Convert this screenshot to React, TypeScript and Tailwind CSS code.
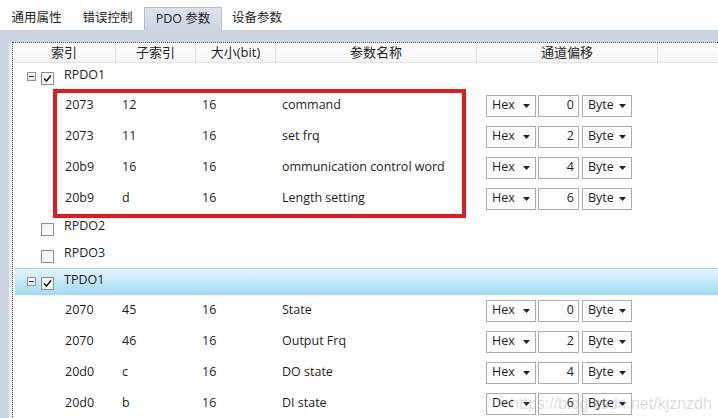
import React from 'react';

interface PdoEntry {
  index: string;
  sub: string;
  size: string;
  name: string;
  base: string;
  offset: string;
}

const rpdo1: PdoEntry[] = [
  { index: '2073', sub: '12', size: '16', name: 'command', base: 'Hex', offset: '0' },
  { index: '2073', sub: '11', size: '16', name: 'set frq', base: 'Hex', offset: '2' },
  { index: '20b9', sub: '16', size: '16', name: 'ommunication control word', base: 'Hex', offset: '4' },
  { index: '20b9', sub: 'd', size: '16', name: 'Length setting', base: 'Hex', offset: '6' },
];

const tpdo1: PdoEntry[] = [
  { index: '2070', sub: '45', size: '16', name: 'State', base: 'Hex', offset: '0' },
  { index: '2070', sub: '46', size: '16', name: 'Output Frq', base: 'Hex', offset: '2' },
  { index: '20d0', sub: 'c', size: '16', name: 'DO state', base: 'Hex', offset: '4' },
  { index: '20d0', sub: 'b', size: '16', name: 'DI state', base: 'Dec', offset: '6' },
];

const cols = 'grid grid-cols-[103px_80px_80px_201px_181px_1fr]';

function Arrow() {
  return (
    <svg width="7" height="4" viewBox="0 0 7 4" className="shrink-0">
      <path d="M0 0 H7 L3.5 4 Z" fill="#222" />
    </svg>
  );
}

function Dropdown({ value }: { value: string }) {
  return (
    <div className="w-[50px] h-[22px] border border-[#adadad] bg-white flex items-center justify-between pl-[5px] pr-[5px]">
      <span>{value}</span>
      <Arrow />
    </div>
  );
}

function Checkbox({ checked }: { checked?: boolean }) {
  return (
    <span className="w-[13px] h-[13px] border border-[#8e8f8f] bg-gradient-to-br from-[#f0f0f0] to-white flex items-center justify-center shrink-0">
      {checked && (
        <svg width="11" height="11" viewBox="0 0 11 11">
          <path d="M2 5.5 L4.5 8 L9 2.5" fill="none" stroke="#1a1a1a" strokeWidth="1.6" />
        </svg>
      )}
    </span>
  );
}

function Expander() {
  return (
    <span className="w-[9px] h-[9px] border border-[#929292] bg-gradient-to-b from-white to-[#e4e4e4] flex items-center justify-center shrink-0">
      <span className="w-[5px] h-[1px] bg-[#333]" />
    </span>
  );
}

function GroupRow({ label, expand, checked, selected }: { label: string; expand?: boolean; checked?: boolean; selected?: boolean }) {
  return (
    <div
      className={`h-[27px] flex items-center ${
        selected
          ? 'ml-[2px] bg-gradient-to-b from-[#e2f4fc] to-[#a2dcf5] border-y border-[#a0d4eb]'
          : ''
      }`}
    >
      <div className={`flex items-center ${selected ? 'pl-[12px]' : 'pl-[14px]'}`}>
        {expand ? <Expander /> : <span className="w-[9px]" />}
        <span className="ml-[5px] mt-[3px]">
          <Checkbox checked={checked} />
        </span>
        <span className="ml-[10px] -mt-[2px]">{label}</span>
      </div>
    </div>
  );
}

function DataRow({ row }: { row: PdoEntry }) {
  return (
    <div className={`${cols} h-[31px] items-center`}>
      <div className="pl-[52px]">{row.index}</div>
      <div className="pl-[6px]">{row.sub}</div>
      <div className="pl-[6px]">{row.size}</div>
      <div className="pl-[6px] whitespace-nowrap">{row.name}</div>
      <div className="pl-[9px] flex items-center">
        <Dropdown value={row.base} />
        <div className="ml-[2px] w-[41px] h-[22px] border border-[#adadad] bg-white flex items-center justify-end pr-[4px]">
          {row.offset}
        </div>
        <div className="ml-[3px]">
          <Dropdown value="Byte" />
        </div>
      </div>
      <div />
    </div>
  );
}

const tabs = [
  { label: '通用属性', w: 'w-[69px]' },
  { label: '错误控制', w: 'w-[73px]' },
  { label: 'PDO 参数', w: 'w-[78px]', active: true },
  { label: '设备参数', w: 'w-[70px]' },
];

export default function App() {
  return (
    <div className="relative w-[718px] h-[418px] overflow-hidden bg-white text-[12.5px] text-[#1e1e1e] font-['Open_Sans','Noto_Sans_CJK_SC',sans-serif] flex flex-col">
      <div className="h-[30px] flex items-end pl-[2px] shrink-0">
        {tabs.map((t) => (
          <div
            key={t.label}
            className={`${t.w} h-[23px] flex items-center justify-center text-[12.5px] ${
              t.active ? 'bg-gradient-to-b from-[#dde3ee] to-[#cdd5e3] border border-b-0 border-[#b6bfd0]' : ''
            }`}
          >
            {t.label}
          </div>
        ))}
      </div>

      <div className="flex-1 bg-[#cdd5e3] pt-[12px] pl-[9px] flex flex-col">
        <div className="flex-1 bg-[#eef1f6] pl-[3px] flex flex-col">
          <div className="flex-1 bg-white border-l border-t border-dotted border-[#3c4a5c] flex flex-col">
            <div className={`${cols} h-[20px] items-center bg-gradient-to-b from-white to-[#f3f4f6] border-b border-[#e4e4e4] text-[13px] text-[#222]`}>
              <div className="text-center border-r border-[#e2e2e2] h-full flex items-center justify-center">索引</div>
              <div className="text-center border-r border-[#e2e2e2] h-full flex items-center justify-center">子索引</div>
              <div className="text-center border-r border-[#e2e2e2] h-full flex items-center justify-center">大小(bit)</div>
              <div className="text-center border-r border-[#e2e2e2] h-full flex items-center justify-center">参数名称</div>
              <div className="text-center border-r border-[#e2e2e2] h-full flex items-center justify-center">通道偏移</div>
              <div />
            </div>

            <GroupRow label="RPDO1" expand checked />
            <div className="relative">
              {rpdo1.map((r, i) => (
                <DataRow key={i} row={r} />
              ))}
              <div className="absolute left-[40px] -top-[1px] w-[413px] h-[129px] border-[4px] border-[#e21a22]" />
            </div>
            <GroupRow label="RPDO2" />
            <GroupRow label="RPDO3" />
            <GroupRow label="TPDO1" expand checked selected />
            {tpdo1.map((r, i) => (
              <DataRow key={i} row={r} />
            ))}
          </div>
        </div>
      </div>

      <div className="absolute left-[510px] top-[392px] text-[16px] text-[rgba(150,150,150,0.35)] font-['Liberation_Sans',sans-serif] pointer-events-none">
        https://blog.csdn.net/kjznzdh
      </div>
    </div>
  );
}
